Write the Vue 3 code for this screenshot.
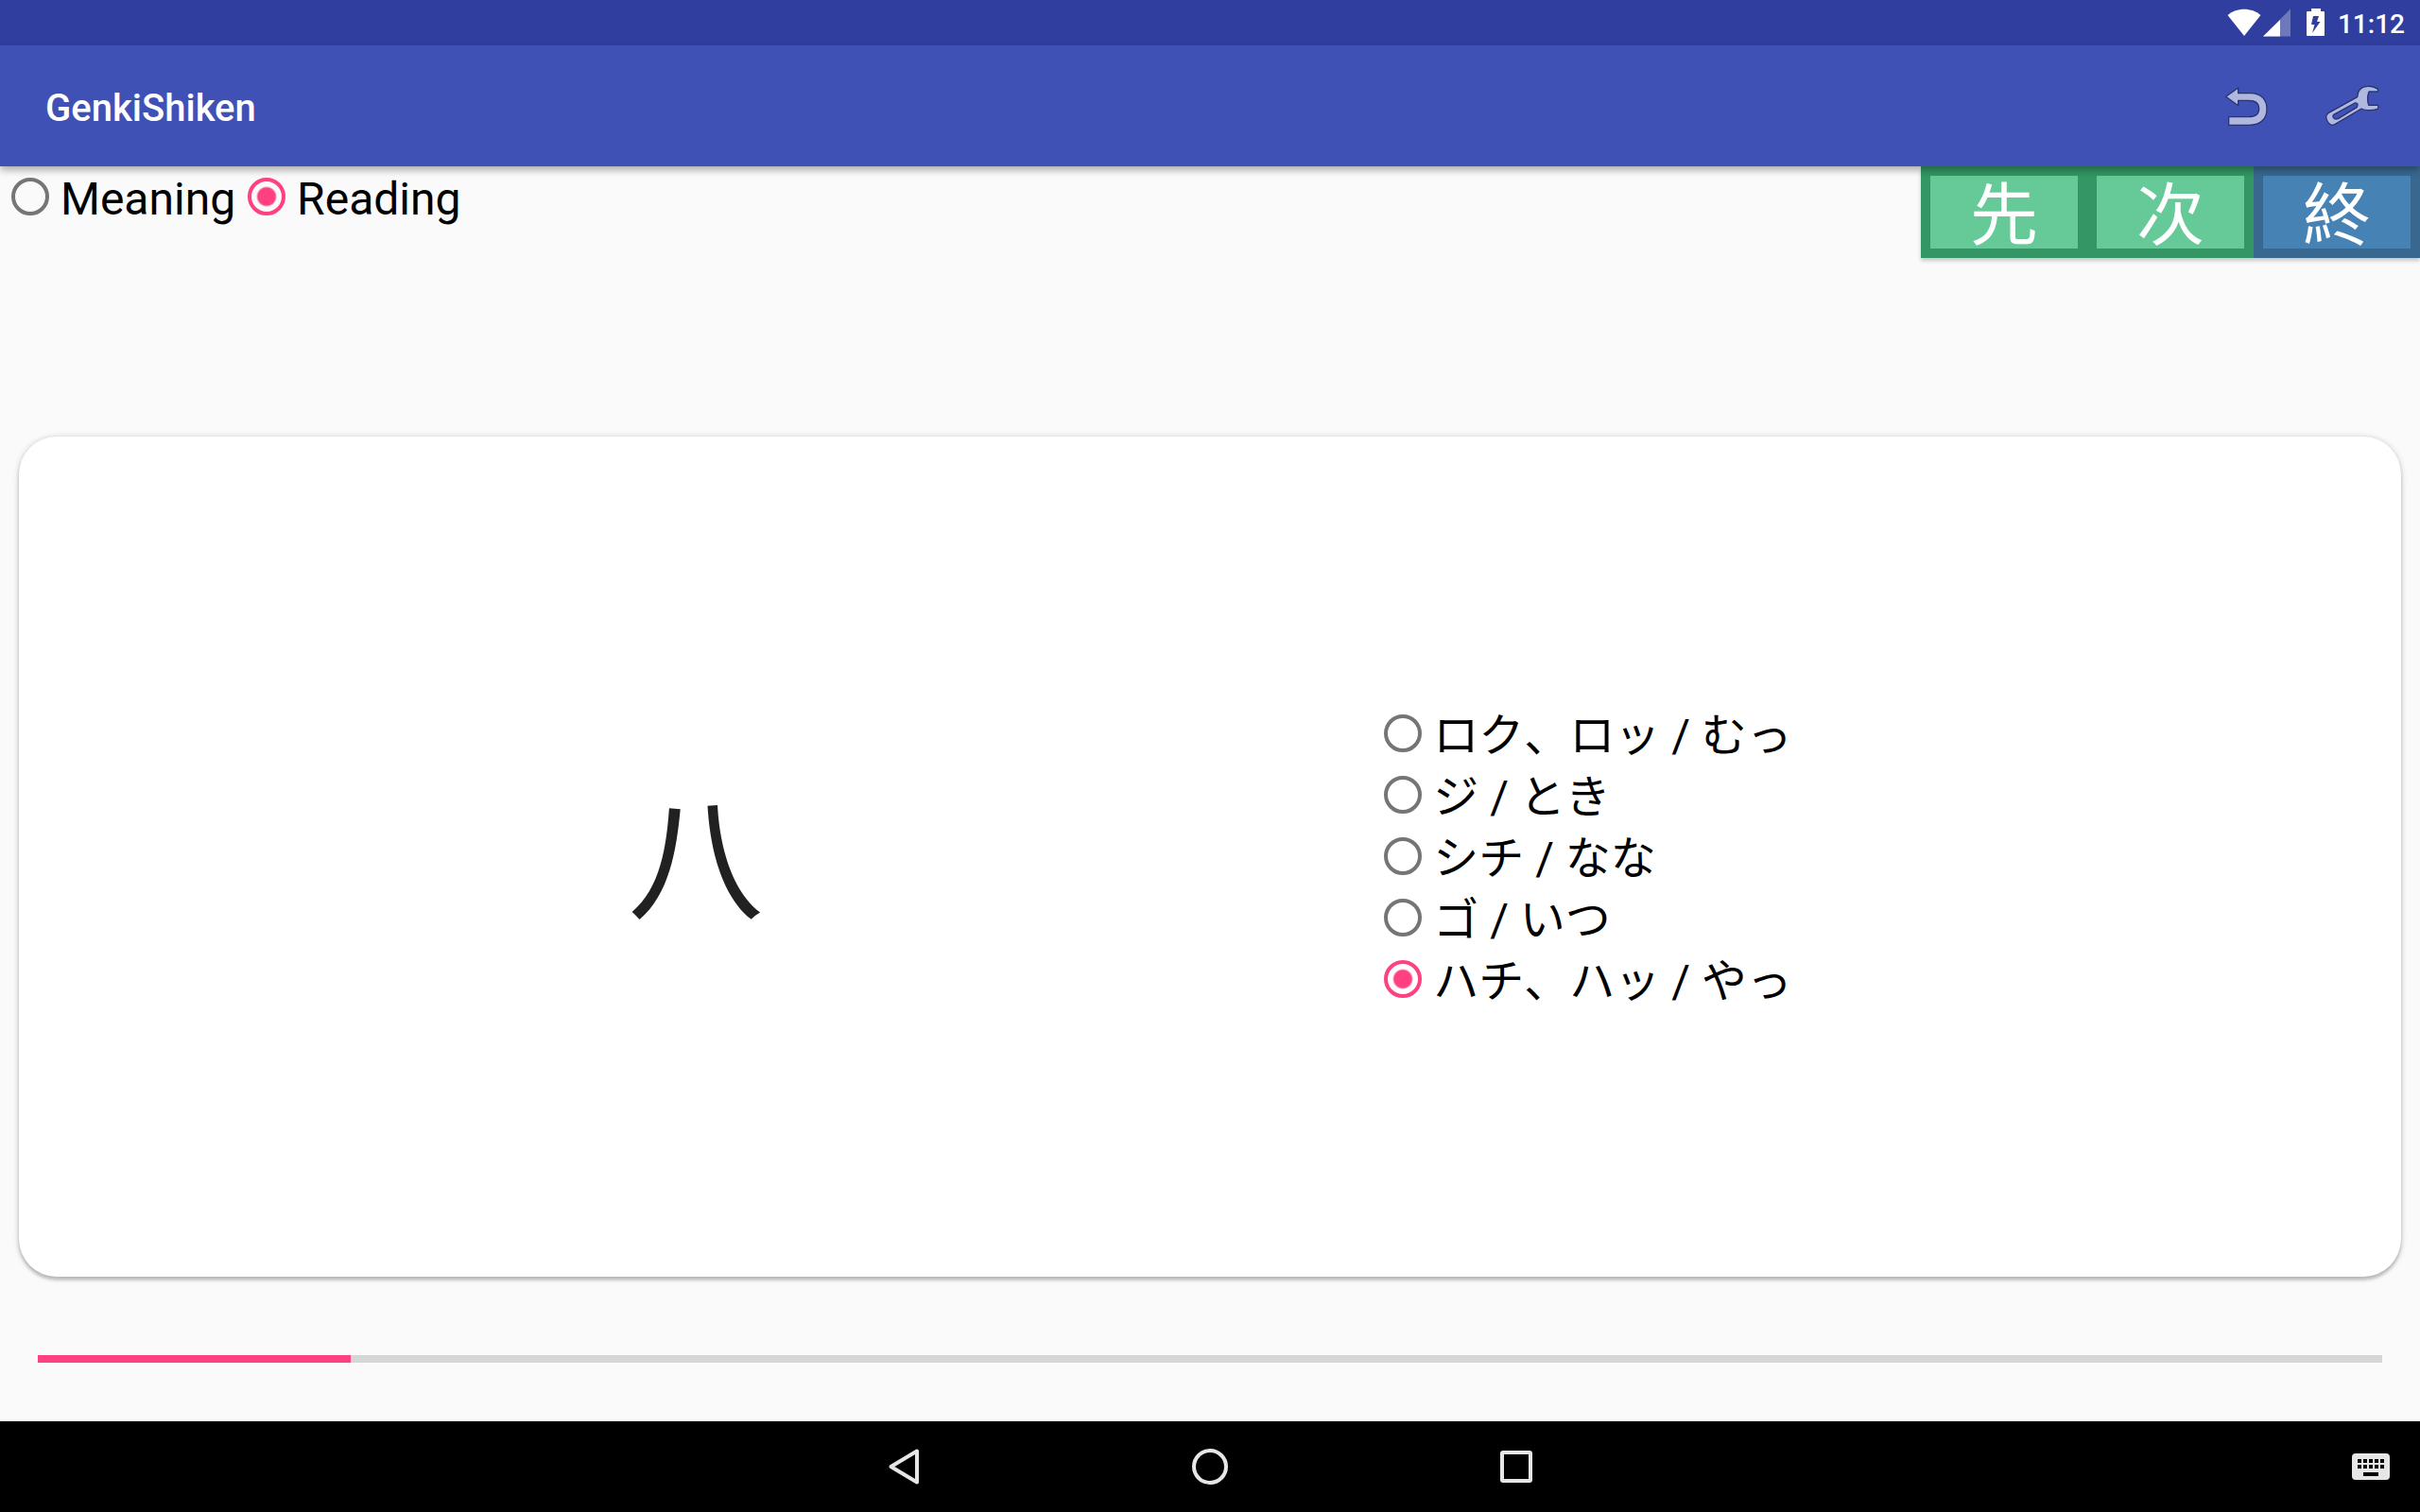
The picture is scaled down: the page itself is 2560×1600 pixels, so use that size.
<script setup>
import { ref } from 'vue'

const modes = ['Meaning', 'Reading']
const mode = ref('Reading')

const answers = ['ロク、ロッ / むっ', 'ジ / とき', 'シチ / なな', 'ゴ / いつ', 'ハチ、ハッ / やっ']
const answer = ref('ハチ、ハッ / やっ')

const controls = [
  { label: '先', kind: 'green' },
  { label: '次', kind: 'green' },
  { label: '終', kind: 'blue' }
]

const keys = [0, 1, 2, 3, 4]
</script>

<template>
  <div class="screen">
    <div class="status-bar">
      <svg class="wifi" width="36" height="30" viewBox="0 0 36 30" aria-hidden="true">
        <path d="M18 29 L0.5 7 C10 -1.5 26 -1.5 35.500 7 Z" fill="#fff" />
      </svg>
      <svg class="signal" width="29" height="30" viewBox="0 0 29 30" aria-hidden="true">
        <path d="M29 0.500 V29.500 H0 Z" fill="#fff" fill-opacity=".3" />
        <path d="M18 12 V29.500 H0 Z" fill="#fff" />
      </svg>
      <svg class="battery" width="20" height="30" viewBox="0 0 20 30" aria-hidden="true">
        <path
          fill="#fff"
          fill-rule="evenodd"
          d="M5 0 H15 V3 H18 Q19 3 19 4 V28 Q19 29 18 29 H1 Q0 29 0 28 V4 Q0 3 1 3 H5 Z M7 8 L5 17 H8.500 L6 26 L14.500 14 H11 L13 8 Z"
        />
      </svg>
      <span class="clock">11:12</span>
    </div>

    <header class="app-bar">
      <h1>GenkiShiken</h1>
      <div class="actions">
        <button type="button" aria-label="Undo">
          <svg width="48" height="44" viewBox="98 60 144 132" aria-hidden="true">
            <path
              class="action-icon"
              d="M106 97 L145 69 V86 H184 C218 86 236 107 236 136 C236 166 218 187 180 187 H115 V161 H178 C202 161 211 152 211 135 C211 118 202 109 178 109 H145 V125 Z"
            />
          </svg>
        </button>
        <button type="button" aria-label="Settings">
          <svg width="60" height="46" viewBox="414 57 180 138" aria-hidden="true">
            <path
              class="action-icon"
              fill-rule="evenodd"
              d="M587 73 C576 66 564 63 554 64 C534 65 522 77 521 98 L429 149 Q420 156 423 167 Q428 184 441 187 Q446 187 451 184 L534 135 C545 141 568 142 585 136 Q590 130 587 124 L557 124 Q550 103 558 81 L584 81 Q589 78 587 73 Z M513 117 Q520 116 522 121 Q523 127 519 131 L460 167 Q450 170 445 164 Q442 158 446 154 Z"
            />
          </svg>
        </button>
      </div>
    </header>

    <main class="content">
      <div class="toolbar">
        <div class="modes" role="radiogroup" aria-label="Mode">
          <label v-for="m in modes" :key="m" class="option">
            <input v-model="mode" type="radio" name="mode" :value="m" />
            <span>{{ m }}</span>
          </label>
        </div>
        <div class="controls">
          <button v-for="c in controls" :key="c.label" type="button" :class="c.kind">{{ c.label }}</button>
        </div>
      </div>

      <section class="card">
        <div class="kanji">八</div>
        <div class="answers" role="radiogroup" aria-label="Answer">
          <label v-for="a in answers" :key="a" class="option">
            <input v-model="answer" type="radio" name="answer" :value="a" />
            <span>{{ a }}</span>
          </label>
        </div>
      </section>

      <progress value="2" max="15" aria-label="Progress"></progress>
    </main>

    <nav class="nav-bar">
      <div class="nav-keys">
        <button type="button" aria-label="Back">
          <svg width="40" height="40" viewBox="0 0 40 40" aria-hidden="true">
            <path d="M34 3.500 V36.500 L6.500 20 Z" />
          </svg>
        </button>
        <button type="button" aria-label="Home">
          <svg width="40" height="40" viewBox="0 0 40 40" aria-hidden="true">
            <circle cx="20" cy="20" r="17" />
          </svg>
        </button>
        <button type="button" aria-label="Recent apps">
          <svg width="40" height="40" viewBox="0 0 40 40" aria-hidden="true">
            <rect x="5" y="5" width="30" height="30" rx="1" />
          </svg>
        </button>
      </div>
      <button class="keyboard" type="button" aria-label="Keyboard">
        <svg width="40" height="28" viewBox="0 0 40 28" aria-hidden="true">
          <rect width="40" height="28" rx="4" fill="#e6e6e6" />
          <g fill="#000">
            <rect v-for="k in keys" :key="'a' + k" :x="6 + k * 6" y="6" width="4" height="4" />
            <rect v-for="k in keys" :key="'b' + k" :x="6 + k * 6" y="12" width="4" height="4" />
            <rect x="12" y="20" width="16" height="4" />
          </g>
        </svg>
      </button>
    </nav>
  </div>
</template>

<style>
body {
  margin: 0;
  background: #fafafa;
}
</style>

<style scoped>
.screen {
  display: flex;
  flex-direction: column;
  min-height: 100vh;
  background: #fafafa;
  color: #000;
  font-family: Roboto, "Noto Sans CJK SC", sans-serif;
  font-kerning: none;
}

button {
  margin: 0;
  padding: 0;
  border: 0;
  background: none;
  font-family: inherit;
  cursor: pointer;
}

svg {
  display: block;
}

.status-bar {
  display: flex;
  align-items: center;
  justify-content: flex-end;
  height: 48px;
  padding-right: 16px;
  background: #303f9f;
  color: #fff;
}

.signal {
  margin-left: 2px;
}

.battery {
  margin: 0 13px 0 17px;
}

.clock {
  padding-top: 4px;
  font-size: 28px;
  font-weight: 500;
  line-height: 44px;
}

.app-bar {
  position: relative;
  z-index: 1;
  display: flex;
  align-items: center;
  justify-content: space-between;
  height: 128px;
  padding: 0 24px 0 48px;
  background: #3f51b5;
  box-shadow: 0 4px 8px rgba(0, 0, 0, 0.32);
}

h1 {
  margin: 0;
  padding-top: 6px;
  color: #fff;
  font-size: 40px;
  font-weight: 500;
  font-kerning: normal;
  line-height: 48px;
}

.actions {
  display: flex;
  gap: 16px;
}

.actions button {
  display: grid;
  place-items: center;
  width: 96px;
  height: 96px;
}

.action-icon {
  fill: #b0b8e0;
  stroke: #29346f;
  stroke-width: 4;
  stroke-linejoin: round;
}

.content {
  display: flex;
  flex: 1;
  flex-direction: column;
}

.toolbar {
  display: flex;
  align-items: flex-start;
  justify-content: space-between;
}

.modes {
  display: flex;
  gap: 1px;
}

.option {
  display: flex;
  align-items: flex-start;
  height: 65px;
  font-size: 48px;
  line-height: 60px;
  white-space: nowrap;
}

.option span {
  padding-top: 5px;
}

.option input {
  appearance: none;
  box-sizing: border-box;
  flex: none;
  width: 40px;
  height: 40px;
  margin: 12px;
  border: 4px solid #757575;
  border-radius: 50%;
}

.option input:checked {
  border-color: #ff4081;
  background: radial-gradient(circle, #ff4081 9px, transparent 11px);
}

.controls {
  display: flex;
  box-shadow: 0 3px 4px rgba(0, 0, 0, 0.2);
}

.controls button {
  box-sizing: border-box;
  width: 176px;
  height: 97px;
  padding-top: 8px;
  border: 10px solid;
  color: #fff;
  font-size: 72px;
  line-height: 69px;
}

.controls .green {
  border-color: #339664;
  background: #66ca98;
}

.controls .blue {
  border-color: #386890;
  background: #4682b4;
}

.card {
  display: flex;
  flex: 1;
  align-items: center;
  justify-content: space-evenly;
  margin: 189px 20px 83px;
  border-radius: 40px;
  background: #fff;
  box-shadow: 0 4px 3px rgba(0, 0, 0, 0.14), 0 1px 6px rgba(0, 0, 0, 0.24);
}

.kanji {
  padding-top: 12px;
  color: #212121;
  font-size: 144px;
  line-height: 208px;
}

progress {
  appearance: none;
  display: block;
  width: auto;
  height: 8px;
  margin: 0 40px 62px;
  border: 0;
  background: #d6d6d6;
}

progress::-webkit-progress-bar {
  background: #d6d6d6;
}

progress::-webkit-progress-value {
  background: #ff4081;
}

.nav-bar {
  display: grid;
  grid-template-columns: 1fr auto 1fr;
  align-items: center;
  height: 96px;
  background: #000;
}

.nav-keys {
  display: flex;
  grid-column: 2;
  gap: 164px;
}

.nav-keys button {
  display: grid;
  place-items: center;
  width: 160px;
  height: 96px;
}

.nav-keys svg {
  fill: none;
  stroke: #e6e6e6;
  stroke-width: 4;
  stroke-linejoin: round;
}

.keyboard {
  justify-self: end;
  padding: 0 32px;
}
</style>
